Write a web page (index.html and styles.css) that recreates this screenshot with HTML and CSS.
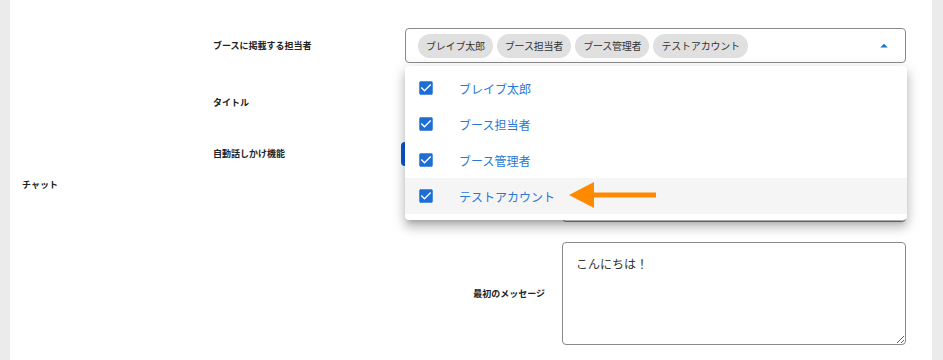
FILE: index.html
```html
<!DOCTYPE html>
<html lang="ja">
<head>
    <meta charset="UTF-8">
    <meta name="viewport" content="width=device-width, initial-scale=1.0">
    <title>ブース設定</title>
    <link rel="stylesheet" href="styles.css">
</head>
<body>
    <main class="page">
        <!-- 担当者 -->
        <div class="row row-staff">
            <div class="section-label"></div>
            <div class="label">ブースに掲載する担当者</div>
            <div class="select">
                <div class="chips">
                    <span class="chip">ブレイブ太郎</span>
                    <span class="chip">ブース担当者</span>
                    <span class="chip">ブース管理者</span>
                    <span class="chip">テストアカウント</span>
                </div>
                <svg class="select-arrow" width="24" height="24" viewBox="0 0 24 24"><path d="M7 14l5-5 5 5z" fill="#1976d2"/></svg>

                <ul class="menu">
                    <li class="menu-item">
                        <svg class="check" width="18" height="18" viewBox="0 0 24 24"><path d="M19 3H5c-1.11 0-2 .9-2 2v14c0 1.1.89 2 2 2h14c1.11 0 2-.9 2-2V5c0-1.1-.89-2-2-2zm-9 14l-5-5 1.41-1.41L10 14.170l7.59-7.59L19 8l-9 9z" fill="#1c6ed4"/></svg>
                        <span>ブレイブ太郎</span>
                    </li>
                    <li class="menu-item">
                        <svg class="check" width="18" height="18" viewBox="0 0 24 24"><path d="M19 3H5c-1.11 0-2 .9-2 2v14c0 1.1.89 2 2 2h14c1.11 0 2-.9 2-2V5c0-1.1-.89-2-2-2zm-9 14l-5-5 1.41-1.41L10 14.17l7.59-7.59L19 8l-9 9z" fill="#1c6ed4"/></svg>
                        <span>ブース担当者</span>
                    </li>
                    <li class="menu-item">
                        <svg class="check" width="18" height="18" viewBox="0 0 24 24"><path d="M19 3H5c-1.11 0-2 .9-2 2v14c0 1.1.89 2 2 2h14c1.11 0 2-.9 2-2V5c0-1.1-.89-2-2-2zm-9 14l-5-5 1.41-1.41L10 14.17l7.59-7.59L19 8l-9 9z" fill="#1c6ed4"/></svg>
                        <span>ブース管理者</span>
                    </li>
                    <li class="menu-item hover">
                        <svg class="check" width="18" height="18" viewBox="0 0 24 24"><path d="M19 3H5c-1.11 0-2 .9-2 2v14c0 1.1.89 2 2 2h14c1.11 0 2-.9 2-2V5c0-1.1-.89-2-2-2zm-9 14l-5-5 1.41-1.41L10 14.17l7.59-7.59L19 8l-9 9z" fill="#1c6ed4"/></svg>
                        <span>テストアカウント</span>
                        <svg class="pointer" width="92" height="30" viewBox="0 0 92 30">
                            <polygon points="2,15 27,2 27,28" fill="#ff8a00"/>
                            <rect x="26" y="12.5" width="63" height="5" fill="#ff8a00"/>
                        </svg>
                    </li>
                </ul>
            </div>
        </div>

        <!-- タイトル -->
        <div class="row row-title">
            <div class="section-label"></div>
            <div class="label">タイトル</div>
            <div class="input"></div>
        </div>

        <!-- チャット -->
        <div class="section">
            <div class="section-label chat-label">チャット</div>
            <div class="section-body">
                <div class="row row-auto">
                    <div class="label">自動話しかけ機能</div>
                    <div class="toggle"><span class="toggle-on"></span><span class="toggle-off"></span></div>
                </div>
                <div class="sub-row sub-input">
                    <div class="sub-label"></div>
                    <div class="input small"></div>
                </div>
                <div class="sub-row sub-message">
                    <div class="sub-label">最初のメッセージ</div>
                    <textarea class="textarea">こんにちは！</textarea>
                </div>
            </div>
        </div>
    </main>
</body>
</html>
```

FILE: styles.css
```css
body {
    margin: 0;
    background: #ebebeb;
    font-family: "Noto Sans CJK JP", "Noto Sans", sans-serif;
    color: #222;
}
.page {
    margin: 0 11px 0 10px;
    height: 360px;
    background: #fff;
    padding-top: 28px;
    box-sizing: border-box;
    overflow: hidden;
}
.row {
    display: flex;
    align-items: center;
}
.section-label {
    width: 191px;
    padding-left: 12px;
    flex-shrink: 0;
    font-size: 9px;
    font-weight: bold;
}
.label {
    width: 192px;
    flex-shrink: 0;
    font-size: 9px;
    font-weight: bold;
    line-height: 12px;
}

/* select */
.select {
    position: relative;
    width: 501px;
    height: 35px;
    box-sizing: border-box;
    border: 1px solid #8a8a8a;
    border-radius: 4px;
    display: flex;
    align-items: center;
    padding-left: 12px;
}
.chips {
    display: flex;
    gap: 4px;
}
.chip {
    background: #e0e0e0;
    border-radius: 12px;
    height: 24px;
    line-height: 24px;
    padding: 0 8px;
    font-size: 10px;
    letter-spacing: -0.2px;
    color: #333;
}
.select-arrow {
    position: absolute;
    right: 9px;
    top: 5px;
    transform: scale(0.75);
}
.menu {
    position: absolute;
    top: 37px;
    left: -1px;
    right: -2px;
    margin: 0;
    padding: 4px 0 6px;
    list-style: none;
    background: #fff;
    border-radius: 4px;
    box-shadow: 0 5px 5px -3px rgba(0, 0, 0, 0.2), 0 8px 10px 1px rgba(0, 0, 0, 0.14), 0 3px 14px 2px rgba(0, 0, 0, 0.12);
    z-index: 10;
}
.menu-item {
    position: relative;
    height: 36px;
    display: flex;
    align-items: center;
    padding-left: 12px;
    font-size: 12px;
    color: #2a78d4;
}
.menu-item.hover {
    background: #f5f5f5;
}
.check {
    margin-right: 24px;
    flex-shrink: 0;
}
.pointer {
    position: absolute;
    left: 162px;
    top: 2px;
}

/* inputs */
.row-title {
    margin-top: 22px;
}
.input {
    width: 501px;
    height: 35px;
    box-sizing: border-box;
    border: 1px solid #8a8a8a;
    border-radius: 4px;
}
.input.small {
    width: 344px;
    height: 36px;
}
.section {
    display: flex;
    margin-top: 22px;
}
.chat-label {
    padding-top: 37px;
    line-height: 12px;
}
.section-body {
    flex: 1;
}
.toggle {
    display: flex;
    height: 24px;
    margin-left: -4px;
}
.toggle-on {
    width: 40px;
    background: #0b57d6;
    border-radius: 4px 0 0 4px;
}
.toggle-off {
    width: 40px;
    box-sizing: border-box;
    border: 1px solid #0b57d6;
    border-radius: 0 4px 4px 0;
}
.sub-row {
    display: flex;
    align-items: center;
    margin-top: 20px;
}
.sub-label {
    width: 332px;
    margin-right: 17px;
    text-align: right;
    font-size: 9px;
    font-weight: bold;
}
.textarea {
    width: 344px;
    height: 103px;
    box-sizing: border-box;
    border: 1px solid #8a8a8a;
    border-radius: 4px;
    padding: 12px 13px;
    font-family: "Noto Sans CJK JP", sans-serif;
    font-size: 12px;
    color: #333;
    resize: vertical;
    margin: 0;
}
```
